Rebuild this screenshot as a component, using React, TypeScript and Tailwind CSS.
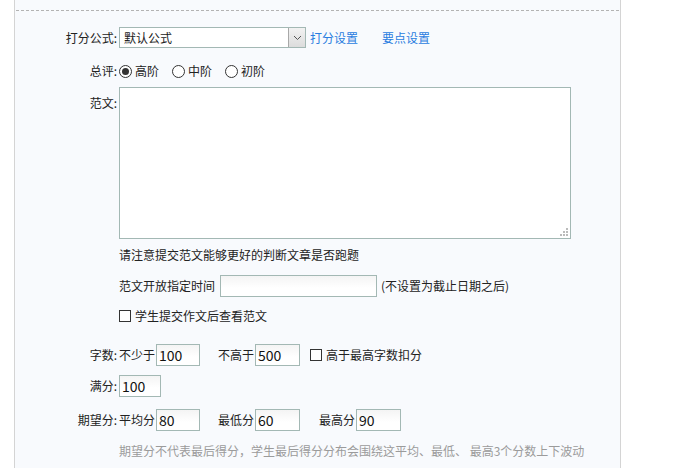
import React, { useState } from "react";

const inputCls =
  "h-[22px] border border-[#a3b8b4] bg-[linear-gradient(#f4f4f4,#ffffff_60%)] px-[2px] text-[14px] leading-[20px] text-[#111] outline-none";

const Radio = ({ checked, label, onClick }: { checked: boolean; label: string; onClick: () => void }) => (
  <div className="flex items-center cursor-pointer" onClick={onClick}>
    <span className="flex h-[13px] w-[13px] items-center justify-center rounded-full border border-[#333] bg-white">
      {checked && <span className="h-[7px] w-[7px] rounded-full bg-[#333]" />}
    </span>
    <span className="ml-[3px] w-[24px]">{label}</span>
  </div>
);

const Check = ({ label }: { label: string }) => {
  const [on, setOn] = useState(false);
  return (
    <div className="flex items-center cursor-pointer" onClick={() => setOn(!on)}>
      <span className="flex h-[12px] w-[12px] items-center justify-center border border-[#333] bg-white text-[10px] leading-none">
        {on && "✓"}
      </span>
      <span className="ml-[4px]">{label}</span>
    </div>
  );
};

const Label = ({ children }: { children: React.ReactNode }) => (
  <div className="w-[104px] shrink-0 pr-[2px] text-right">{children}</div>
);

export default function App() {
  const [level, setLevel] = useState("高阶");

  return (
    <div className="min-h-[468px] bg-white font-['Noto_Sans_CJK_SC','Microsoft_YaHei',sans-serif] text-[12px] leading-[16px] text-[#222]">
      <div className="ml-[14px] min-h-[468px] w-[607px] border-x border-[#d4d4d4] bg-[#f8fafd]">
        <div className="px-[1px] pt-[10px]">
          <div className="border-t border-dashed border-[#b3b3b3]" />
        </div>

        {/* 打分公式 */}
        <div className="mt-[16px] flex h-[21px] items-center">
          <Label>打分公式:</Label>
          <div className="flex h-[21px] w-[187px] border border-[#a3b8b4] bg-white">
            <div className="flex-1 pl-[4px] text-[12px] leading-[19px]">默认公式</div>
            <div className="flex w-[17px] items-center justify-center border-l border-[#a8a8a8] bg-[linear-gradient(#f2f2f2,#dcdcdc)]">
              <svg width="9" height="6" viewBox="0 0 9 6">
                <polyline points="1,1 4.5,4.5 8,1" fill="none" stroke="#555" strokeWidth="1" />
              </svg>
            </div>
          </div>
          <a className="ml-[4px] text-[#2a7de0]" href="#">
            打分设置
          </a>
          <a className="ml-[24px] text-[#2a7de0]" href="#">
            要点设置
          </a>
        </div>

        {/* 总评 */}
        <div className="mt-[15px] flex h-[16px] items-center">
          <Label>总评:</Label>
          <div className="flex items-center gap-[13px]">
            {["高阶", "中阶", "初阶"].map((l) => (
              <Radio key={l} label={l} checked={level === l} onClick={() => setLevel(l)} />
            ))}
          </div>
        </div>

        {/* 范文 */}
        <div className="mt-[8px] flex">
          <div className="w-[104px] shrink-0 pr-[2px] pt-[8px] text-right">范文:</div>
          <div className="flex flex-col">
            <div className="relative h-[152px] w-[452px] border border-[#a3b8b4] bg-white">
              <svg className="absolute bottom-[2px] right-[2px]" width="8" height="8" viewBox="0 0 8 8">
                <rect x="6" y="0" width="2" height="2" fill="#bbb" />
                <rect x="3" y="3" width="2" height="2" fill="#bbb" />
                <rect x="6" y="3" width="2" height="2" fill="#bbb" />
                <rect x="0" y="6" width="2" height="2" fill="#bbb" />
                <rect x="3" y="6" width="2" height="2" fill="#bbb" />
                <rect x="6" y="6" width="2" height="2" fill="#bbb" />
              </svg>
            </div>
            <div className="mt-[8px]">请注意提交范文能够更好的判断文章是否跑题</div>
            <div className="mt-[12px] flex items-center">
              <span>范文开放指定时间</span>
              <input className={`${inputCls} ml-[5px] w-[157px] bg-[#f8f8f8]`} />
              <span className="ml-[4px]">(不设置为截止日期之后)</span>
            </div>
            <div className="mt-[11px]">
              <Check label="学生提交作文后查看范文" />
            </div>
          </div>
        </div>

        {/* 字数 */}
        <div className="mt-[20px] flex items-center">
          <Label>字数:</Label>
          <span>不少于</span>
          <input className={`${inputCls} ml-[1px] w-[44px]`} defaultValue="100" />
          <span className="ml-[18px]">不高于</span>
          <input className={`${inputCls} ml-[1px] w-[45px]`} defaultValue="500" />
          <div className="ml-[10px]">
            <Check label="高于最高字数扣分" />
          </div>
        </div>

        {/* 满分 */}
        <div className="mt-[9px] flex items-center">
          <Label>满分:</Label>
          <input className={`${inputCls} w-[42px]`} defaultValue="100" />
        </div>

        {/* 期望分 */}
        <div className="mt-[12px] flex items-center">
          <Label>期望分:</Label>
          <span>平均分</span>
          <input className={`${inputCls} ml-[1px] w-[44px]`} defaultValue="80" />
          <span className="ml-[18px]">最低分</span>
          <input className={`${inputCls} ml-[1px] w-[45px]`} defaultValue="60" />
          <span className="ml-[19px]">最高分</span>
          <input className={`${inputCls} ml-[1px] w-[45px]`} defaultValue="90" />
        </div>

        <div className="mt-[12px] pl-[104px] text-[#9b9b9b]">
          期望分不代表最后得分，学生最后得分分布会围绕这平均、最低、 最高3个分数上下波动
        </div>
      </div>
    </div>
  );
}
